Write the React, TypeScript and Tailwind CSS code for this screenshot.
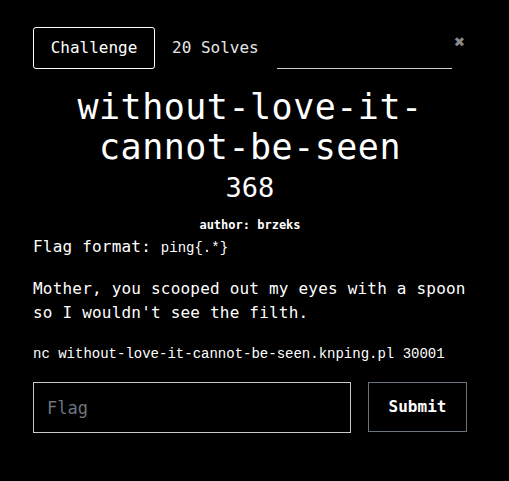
import React from "react";

export default function App() {
  const mono = { fontFamily: '"DejaVu Sans Mono", "Liberation Mono", monospace' };
  return (
    <div className="w-[509px] h-[481px] bg-black text-white overflow-hidden" style={mono}>
      <div className="pl-[33px] pr-[42px] pt-[27px]">
        <div className="flex items-start">
          <div className="flex h-[42px] w-[122px] shrink-0 items-center justify-center rounded-[3px] border border-white text-[16px]">
            Challenge
          </div>
          <div className="flex h-[42px] shrink-0 items-center whitespace-nowrap pl-[17px] pr-[18px] text-[16px] text-[#e6e6e6]">
            20 Solves
          </div>
          <div className="h-[42px] w-[175px] shrink-0 border-b border-[#d0d0d0]" />
          <div className="ml-0 mt-[6px] w-[16px] shrink-0 text-center text-[18px] font-bold leading-none text-[#8a8a8a]">
            ✖
          </div>
        </div>
        <div className="mt-[18px] text-center text-[35px] leading-[40px] tracking-[0.5px]">
          without-love-it-
          <br />
          cannot-be-seen
        </div>
        <div className="mt-[5px] text-center text-[27px] leading-[32px]">368</div>
        <div className="mt-[13px] text-center text-[12px] font-bold leading-[16px]">author: brzeks</div>
        <div className="mt-[3px] text-[16px] leading-[22px] tracking-[0.2px]">
          Flag format:{" "}
          <span className="text-[14px] tracking-normal" style={{ fontFamily: '"Liberation Mono", monospace' }}>
            ping{"{.*}"}
          </span>
        </div>
        <div className="mt-[18px] text-[16px] leading-[24px] tracking-[0.2px]">
          Mother, you scooped out my eyes with a spoon so I wouldn't see the filth.
        </div>
        <div className="mt-[19px] text-[14px] leading-[20px]" style={{ fontFamily: '"Liberation Mono", monospace' }}>
          nc without-love-it-cannot-be-seen.knping.pl 30001
        </div>
        <div className="mt-[18px] flex items-start">
          <input
            placeholder="Flag"
            className="h-[51px] w-[318px] border border-[#c8c8c8] bg-black px-[13px] text-[17px] text-white outline-none placeholder:text-[#6c757d]"
            style={mono}
          />
          <button className="ml-[17px] h-[50px] w-[99px] border border-[#6c757d] bg-black text-[16px] font-bold text-white">
            Submit
          </button>
        </div>
      </div>
    </div>
  );
}
